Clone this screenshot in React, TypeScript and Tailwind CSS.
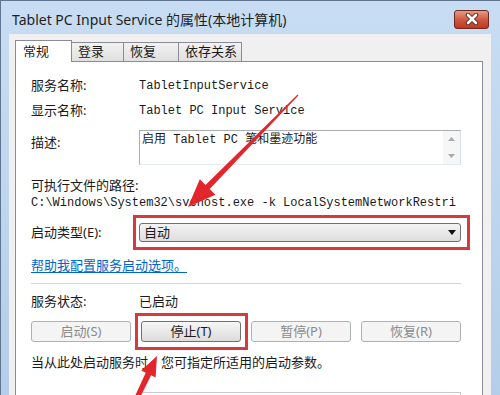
const cjk = "font-['Noto_Sans','Noto_Sans_CJK_SC',sans-serif]";
const mono = "font-['Liberation_Mono','Noto_Sans_CJK_SC',monospace]";

const Row = ({ label, children, className = "" }: { label: string; children?: React.ReactNode; className?: string }) => (
  <div className={`flex items-center ${className}`}>
    <div className="w-[108px] shrink-0">{label}</div>
    {children}
  </div>
);

const Btn = ({ text, disabled }: { text: string; disabled?: boolean }) => (
  <div
    className={`h-[21px] flex items-center justify-center rounded-[3px] border ${
      disabled
        ? "border-[#adb2b5] bg-[#f4f4f4] text-[#8b8b8b]"
        : "border-[#707070] bg-gradient-to-b from-[#f6f6f6] to-[#dcdcdc] text-[#1a1a1a]"
    }`}
  >
    {text}
  </div>
);

const Tab = ({ text, active, w }: { text: string; active?: boolean; w: string }) =>
  active ? (
    <div className={`relative z-10 h-[22px] mb-[-1px] ${w} bg-white border border-b-0 border-[#898c95] pl-[7px] pt-[1px] leading-[18px]`}>
      {text}
    </div>
  ) : (
    <div className={`h-[19px] ml-[-1px] ${w} border border-b-0 border-[#898c95] bg-gradient-to-b from-[#f2f2f2] to-[#e0e0e0] pl-[6px] leading-[17px]`}>
      {text}
    </div>
  );

export default function App() {
  return (
    <div
      className={`relative w-[500px] h-[395px] overflow-hidden bg-gradient-to-b from-[#c8ddf3] to-[#b4cee9] shadow-[inset_1px_1px_0_#5f7590] text-[13px] text-[#1a1a1a] ${cjk}`}
    >
      {/* title bar */}
      <div className="h-[34px] flex items-center justify-between pl-[12px] pr-[11px]">
        <div className="text-[14px] text-[#1e1e1e] pt-[4px]">Tablet PC Input Service 的属性(本地计算机)</div>
        <div className="w-[35px] h-[19px] mt-[4px] rounded-[3px] border border-[#6a2a1e] bg-gradient-to-b from-[#e39a8a] via-[#cf5a43] to-[#c2361f] flex items-center justify-center">
          <svg width="14" height="12" viewBox="0 0 14 12">
            <path d="M3 2 L11 10 M11 2 L3 10" stroke="#5a2418" strokeWidth="4.5" strokeLinecap="round" />
            <path d="M3 2 L11 10 M11 2 L3 10" stroke="#ffffff" strokeWidth="2.6" strokeLinecap="round" />
          </svg>
        </div>
      </div>

      {/* client area */}
      <div className="mx-[9px] h-[361px] bg-[#f0f0f0] pt-[6px] pl-[6px] pr-[8px] flex flex-col">
        <div className="flex items-end h-[21px]">
          <Tab text="常规" active w="w-[57px]" />
          <Tab text="登录" w="w-[53px]" />
          <Tab text="恢复" w="w-[56px]" />
          <Tab text="依存关系" w="w-[64px]" />
        </div>

        <div className="flex-1 bg-white border border-[#898c95] pl-[15px] pr-[21px] pt-[11px]">
          <Row label="服务名称:" className="h-[25px]">
            <span className={`${mono} text-[12px]`}>TabletInputService</span>
          </Row>
          <Row label="显示名称:" className="h-[25px]">
            <span className={`${mono} text-[12px]`}>Tablet PC Input Service</span>
          </Row>

          <div className="flex mt-[7px] h-[35px]">
            <div className="w-[108px] shrink-0 pt-[2px] leading-[20px]">描述:</div>
            <div className="flex-1 flex border border-[#abadb3] border-r-[#dbdfe6] border-b-[#e3e9ef]">
              <div className={`flex-1 ${mono} text-[12px] pl-[2px] pt-[1px] leading-[16px]`}>启用 Tablet PC 笔和墨迹功能</div>
              <div className="w-[17px] bg-[#f6f6f6] flex flex-col items-center justify-between py-[6px]">
                <svg width="7" height="4" viewBox="0 0 7 4"><path d="M0 4 L3.5 0 L7 4 Z" fill="#a9a9a9" /></svg>
                <svg width="7" height="4" viewBox="0 0 7 4"><path d="M0 0 L3.5 4 L7 0 Z" fill="#a9a9a9" /></svg>
              </div>
            </div>
          </div>

          <div className="mt-[11px] h-[18px] leading-[18px]">可执行文件的路径:</div>
          <div className={`h-[18px] leading-[18px] ${mono} text-[12px] whitespace-nowrap overflow-hidden w-[430px]`}>
            C:\Windows\System32\svchost.exe -k LocalSystemNetworkRestri
          </div>

          <Row label="启动类型(E):" className="mt-[11px] h-[19px]">
            <div className="flex-1 h-[19px] rounded-[3px] border border-[#707070] bg-gradient-to-b from-[#f3f3f3] to-[#dedede] flex items-center justify-between pl-[4px] pr-[4px]">
              <span>自动</span>
              <svg width="8" height="5" viewBox="0 0 8 5"><path d="M0 0 L8 0 L4 5 Z" fill="#111" /></svg>
            </div>
          </Row>

          <div className="mt-[14px] h-[18px] leading-[18px]">
            <span className="text-[#0066cc] underline underline-offset-2">帮助我配置服务启动选项。</span>
          </div>

          <div className="mt-[9px] h-px bg-[#d5d5d5]" />

          <Row label="服务状态:" className="mt-[9px] h-[18px]">
            <span>已启动</span>
          </Row>

          <div className="mt-[10px] grid grid-cols-4 gap-x-[10px]">
            <Btn text="启动(S)" disabled />
            <Btn text="停止(T)" />
            <Btn text="暂停(P)" disabled />
            <Btn text="恢复(R)" disabled />
          </div>

          <div className="mt-[11px] h-[18px] leading-[18px] whitespace-nowrap">当从此处启动服务时，您可指定所适用的启动参数。</div>

          <div className="mt-[21px] flex">
            <div className="w-[108px] shrink-0" />
            <div className="flex-1 h-[20px] border border-[#c8ccd2]" />
          </div>
        </div>
      </div>

      {/* red annotations */}
      <svg className="absolute left-0 top-0 pointer-events-none" width="500" height="395" viewBox="0 0 500 395">
        <rect x="134.5" y="216.5" width="334" height="32" fill="none" stroke="#d63a3d" strokeWidth="3" />
        <rect x="136.5" y="314.5" width="110" height="34" fill="none" stroke="#d63a3d" strokeWidth="3" />
        <polygon
          points="298.4,95.4 209.7,189.1 215.4,194.7 188,207 199.8,179.3 205.5,184.9 297.6,94.6"
          fill="#e3262b"
        />
        <polygon
          points="138.25,401.1 151.1,375.3 155.6,377.4 157,356 141.2,370.6 145.7,372.7 133.75,398.9"
          fill="#e3262b"
        />
      </svg>
    </div>
  );
}
